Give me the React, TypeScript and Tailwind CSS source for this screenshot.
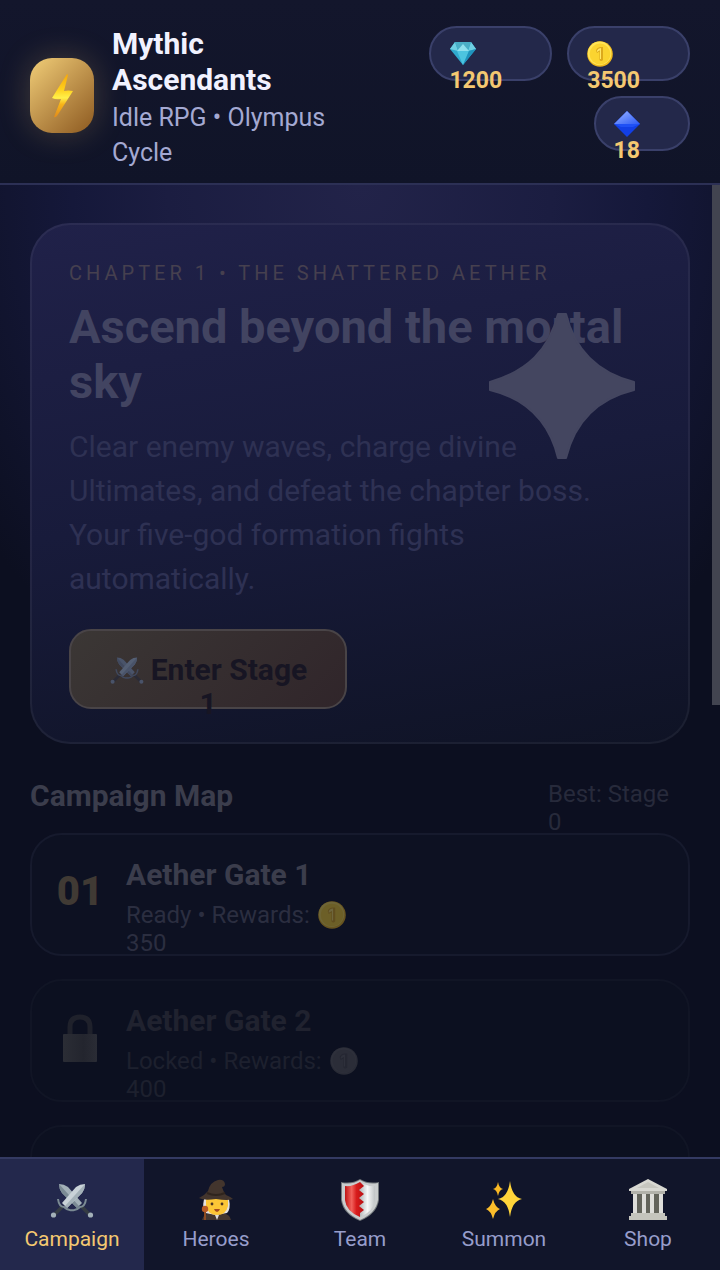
import type { ReactNode } from 'react';

function Bolt() {
  return (
    <svg viewBox="0 0 24 46" className="w-6 h-[46px]" aria-hidden="true">
      <defs>
        <linearGradient id="bolt" x1="0" y1="0" x2="0" y2="1">
          <stop offset="0" stopColor="#f5a70c" />
          <stop offset="0.35" stopColor="#ffcf1c" />
          <stop offset="0.55" stopColor="#fff04a" />
          <stop offset="0.7" stopColor="#f8b418" />
          <stop offset="1" stopColor="#e08a1c" />
        </linearGradient>
      </defs>
      <path d="M17 1 L2 25 Q6 27 11 26 L4 44 Q5 45 7 43 L23 18 Q18 17 14 18 L18 2 Z" fill="url(#bolt)" />
    </svg>
  );
}

function Gem() {
  return (
    <svg viewBox="0 0 28 26" className="w-7 h-[26px]" aria-hidden="true">
      <path d="M6 1 H22 L27 8 L14 24 L1 8 Z" fill="#2fa9cd" />
      <path d="M6 1 L9 10 L1 8 Z M22 1 L19 10 L27 8 Z" fill="#6fcfe2" />
      <path d="M6 1 H22 L19 9 L14 4 L9 9 Z" fill="#4aaec6" />
      <path d="M14 3 L20 10 H8 Z" fill="#8fe0ee" />
      <path d="M8 10 H20 L14 24 Z" fill="#4cc4e0" />
      <path d="M20 10 L27 8 L14 24 Z" fill="#1f93bd" />
    </svg>
  );
}

function Coin({ className = 'size-[26px]', muted = false }: { className?: string; muted?: boolean }) {
  return (
    <svg viewBox="0 0 26 26" className={className} aria-hidden="true">
      <circle cx="13" cy="13" r="12.8" fill={muted ? '#292b36' : '#efb81c'} />
      <circle cx="12.6" cy="12.4" r="11.8" fill={muted ? '#2e303b' : '#ffe455'} />
      <circle cx="13" cy="13" r="10.4" fill={muted ? '#2b2d38' : '#fbd430'} />
      <path d="M9 9.5 Q10 6 14 6 H16 V19 Q14 21 12.5 19 V10.5 L10 12 Z" fill={muted ? '#252732' : '#dca91c'} />
      <path d="M10 9.5 Q11 7 14 7 V18 H13 V9.3 L10 11 Z" fill={muted ? '#2e303b' : '#ffe667'} />
    </svg>
  );
}

function Diamond() {
  return (
    <svg viewBox="0 0 26 26" className="size-[26px]" aria-hidden="true">
      <defs>
        <linearGradient id="diamondTop" x1="0" y1="0" x2="1" y2="1">
          <stop offset="0.2" stopColor="#86a4ff" />
          <stop offset="1" stopColor="#2c5af5" />
        </linearGradient>
      </defs>
      <path d="M13 0 L26 13 L13 26 L0 13 Z" fill="#123fe6" />
      <path d="M13 0 L26 13 H0 Z" fill="url(#diamondTop)" />
      <path d="M0 13 H26 L19 16 H7 Z" fill="#1f50f5" />
    </svg>
  );
}

function Swords({ className = 'w-11 h-9', tint = false }: { className?: string; tint?: boolean }) {
  const light = tint ? '#7fa3d8' : '#c9d3d8';
  const mid = tint ? '#6486bd' : '#a3b1b8';
  const dark = tint ? '#4c6a9e' : '#7b8b94';
  const grip = tint ? '#18233f' : '#353c44';
  return (
    <svg viewBox="0 0 44 36" className={className} aria-hidden="true">
      <path d="M13 24 L4 33 M31 24 L40 33" stroke={grip} strokeWidth="3.5" />
      <path d="M9 2 Q14 2 18 5 L32 21 L27 26 L12 11 Q9 7 9 2 Z" fill={mid} />
      <path d="M9 2 L29 24 L27 26 L12 11 Q9 7 9 2 Z" fill={dark} />
      <path d="M35 2 Q30 2 26 5 L12 21 L17 26 L32 11 Q35 7 35 2 Z" fill={light} />
      <path d="M35 2 L15 24 L17 26 L32 11 Q35 7 35 2 Z" fill={mid} />
      <path d="M8 17 Q9 25 14 25 Q18 29 22 28 M36 17 Q35 25 30 25 Q26 29 22 28" stroke={dark} strokeWidth="2" fill="none" />
      <circle cx="3.5" cy="33" r="2.6" fill={mid} />
      <circle cx="40.5" cy="33" r="2.6" fill={mid} />
    </svg>
  );
}

function Mage() {
  return (
    <svg viewBox="0 0 40 42" className="w-10 h-[42px]" aria-hidden="true">
      <path d="M6 41 Q7 35 15 34 H26 Q34 35 35 41 Z" fill="#453830" />
      <path d="M8 20 Q6 30 9 34 L20 36 L31 34 Q35 30 33 20 Z" fill="#e5e1df" />
      <path d="M10 19 H32 V27 Q30 36 21 36 Q12 36 10 27 Z" fill="#fcc636" />
      <path d="M3 19 Q8 17 12 12 Q14 3 22 1 Q28 0 29 5 Q29 8 26 8 Q28 14 30 16 Q35 18 37 20 Q32 22 20 20 Q8 22 3 19 Z" fill="#43352d" />
      <path d="M11 14 Q20 18 29 14" stroke="#2f241d" strokeWidth="2" fill="none" />
      <circle cx="16" cy="25" r="1.4" fill="#4d3421" />
      <circle cx="26" cy="25" r="1.4" fill="#4d3421" />
      <path d="M18 30 H24 Q23 33 21 33 Q19 33 18 30 Z" fill="#a54b20" />
      <path d="M19 36 L21 41 L23 36 Z" fill="#ddd" />
      <path d="M9 32 V41" stroke="#8b4a22" strokeWidth="2" />
      <circle cx="9" cy="30" r="3.2" fill="#b85a24" />
    </svg>
  );
}

function Shield() {
  return (
    <svg viewBox="0 0 40 44" className="w-10 h-11" aria-hidden="true">
      <defs>
        <linearGradient id="shieldRed">
          <stop offset="0" stopColor="#c01414" />
          <stop offset="0.35" stopColor="#f2625c" />
          <stop offset="0.6" stopColor="#d81c1c" />
          <stop offset="1" stopColor="#b80f12" />
        </linearGradient>
        <linearGradient id="shieldSteel">
          <stop offset="0.5" stopColor="#b4b8ba" />
          <stop offset="0.75" stopColor="#f7f8f8" />
          <stop offset="1" stopColor="#bfc3c5" />
        </linearGradient>
      </defs>
      <path d="M20 1 Q28 6 39 4 V22 Q37 36 20 43 Q3 36 1 22 V4 Q12 6 20 1 Z" fill="#71777b" />
      <path d="M20 2 Q28 7 38 5 V22 Q36 35 20 42 Q4 35 2 22 V5 Q12 7 20 2 Z" fill="#c9cccd" />
      <path d="M20 4 Q28 9 35 8 V22 Q34 33 20 39 Q6 33 5 22 V8 Q12 9 20 4 Z" fill="url(#shieldSteel)" />
      <path
        d="M20 4 L24 8 L19 12 L24 16 L19 20 L24 24 L19 28 L24 32 L20 35 V39 Q6 33 5 22 V8 Q12 9 20 4 Z"
        fill="url(#shieldRed)"
      />
    </svg>
  );
}

function Sparkles() {
  return (
    <svg viewBox="0 0 36 38" className="w-9 h-[38px]" aria-hidden="true">
      <path d="M24 0 Q26 16 36 18 Q26 20 24 36 Q22 20 12 18 Q22 16 24 0 Z" fill="#ffd43a" />
      <path d="M12 1 Q13 7 17 8 Q13 9 12 15 Q11 9 7 8 Q11 7 12 1 Z" fill="#fbb924" />
      <path d="M7 18 Q9 26 14 28 Q9 30 7 38 Q5 30 0 28 Q5 26 7 18 Z" fill="#fbbd2b" />
    </svg>
  );
}

function Temple() {
  return (
    <svg viewBox="0 0 40 42" className="w-10 h-[42px]" aria-hidden="true">
      <rect x="5" y="13" width="30" height="23" fill="#63645b" />
      <path d="M20 0 L39 10 V12 H1 V10 Z" fill="#d8d8d2" />
      <path d="M20 3 L31 9 H9 Z" fill="#c6c6bf" />
      <path d="M3 12 H37 V15 H3 Z" fill="#b2b2aa" />
      <path d="M5 15 H9 V35 H5 Z M14 15 H18 V35 H14 Z M22 15 H26 V35 H22 Z M31 15 H35 V35 H31 Z" fill="#dededa" />
      <path d="M3 34 H37 V37 H39 V41 H1 V37 H3 Z" fill="#c5c5bd" />
    </svg>
  );
}

function Lock() {
  return (
    <svg viewBox="0 0 34 48" className="w-[34px] h-12" aria-hidden="true">
      <defs>
        <linearGradient id="lock">
          <stop offset="0" stopColor="#2b2d35" />
          <stop offset="0.6" stopColor="#23252e" />
          <stop offset="1" stopColor="#2a2c35" />
        </linearGradient>
      </defs>
      <path d="M7 21 V13 Q7 3 17 3 Q27 3 27 13 V21" stroke="#1f212b" strokeWidth="5" fill="none" />
      <rect x="0" y="20" width="34" height="28" rx="1" fill="url(#lock)" />
    </svg>
  );
}

function Pill({ icon, value }: { icon: ReactNode; value: string }) {
  return (
    <div className="h-[55px] rounded-full border-2 border-[#3a406a] bg-[#23284a] pt-3 pr-12 pl-[18px]">
      <div className="flex h-7 items-center">{icon}</div>
      <div className="text-[23px] leading-[26px] font-bold text-[#f4c871]">{value}</div>
    </div>
  );
}

const stages = [
  { name: 'Aether Gate 1', status: 'Ready', reward: 350, locked: false },
  { name: 'Aether Gate 2', status: 'Locked', reward: 400, locked: true },
];

const tabs = [
  { label: 'Campaign', icon: <Swords /> },
  { label: 'Heroes', icon: <Mage /> },
  { label: 'Team', icon: <Shield /> },
  { label: 'Summon', icon: <Sparkles /> },
  { label: 'Shop', icon: <Temple /> },
];

export default function App() {
  return (
    <div className="flex h-screen flex-col overflow-hidden bg-[#0b0f1e] font-['Roboto',sans-serif] text-[#f1f2ff]">
      <header className="flex shrink-0 items-start justify-between border-b-2 border-[#2c3055] bg-linear-to-b from-[#13162c] to-[#101428] px-[30px] pt-[26px] pb-[13px]">
        <div className="flex items-start gap-[18px]">
          <div className="mt-8 flex h-[75px] w-16 shrink-0 items-center justify-center rounded-[22px] bg-linear-135 from-[#f1ce78] to-[#8d5a20] shadow-[0_0_32px_rgba(244,200,113,0.22)]">
            <Bolt />
          </div>
          <div className="w-56">
            <h1 className="text-[30px] leading-9 font-bold">Mythic Ascendants</h1>
            <p className="mt-0.5 text-[25px] leading-[35px] text-[#a4a9d2]">Idle RPG • Olympus Cycle</p>
          </div>
        </div>
        <div className="flex w-[280px] flex-wrap justify-end gap-[15px]">
          <Pill icon={<Gem />} value="1200" />
          <Pill icon={<Coin />} value="3500" />
          <Pill icon={<Diamond />} value="18" />
        </div>
      </header>

      <div className="flex min-h-0 flex-1 bg-[radial-gradient(ellipse_480px_560px_at_50%_0%,#222349_0%,#1b1d41_40%,#15183a_60%,#0c0f20_100%)]">
        <main className="min-w-0 flex-1 overflow-hidden pt-[38px] pr-[22px] pl-[30px]">
          <section className="relative rounded-[40px] border-2 border-white/5 bg-linear-170 from-[#202149] via-[#181b3b] to-[#0f1325] bg-origin-border px-[37px] pt-[34px] pb-[33px]">
            <p className="text-[20px] leading-7 tracking-[4px] text-[#46404f]">CHAPTER 1 • THE SHATTERED AETHER</p>
            <h2 className="mt-3 text-[47px] leading-[55px] font-bold text-[#424461]">Ascend beyond the mortal sky</h2>
            <p className="mt-4 w-[540px] max-w-full text-[30px] leading-[44px] text-[#2e3153]">
              Clear enemy waves, charge divine Ultimates, and defeat the chapter boss. Your five-god formation fights
              automatically.
            </p>
            <button className="mt-7 flex h-20 w-[278px] flex-col items-center rounded-[22px] border-2 border-[#494447] bg-linear-135 from-[#3b3735] to-[#30252a] bg-origin-border pt-[22px] text-[30px] leading-[34px] font-bold text-[#171523]">
              <span className="flex items-center gap-1.5">
                <Swords className="h-7 w-9 opacity-40" tint />
                Enter Stage
              </span>
              <span>1</span>
            </button>
            <svg viewBox="0 0 146 146" className="absolute top-[88px] right-[53px] size-[146px]" aria-hidden="true">
              <path
                d="M69 1 H77 C86 38 110 60 145 69 V77 C108 86 86 108 77 145 H69 C60 108 38 86 1 77 V69 C38 58 60 37 69 1 Z"
                fill="#444660"
                stroke="#444660"
                strokeWidth="2"
                strokeLinejoin="round"
              />
            </svg>
          </section>

          <div className="flex h-[89px] items-start justify-between pt-8 pr-[18px]">
            <h2 className="text-[30px] leading-10 font-bold text-[#3b3d4c]">Campaign Map</h2>
            <p className="w-[124px] pt-1 text-[24px] leading-7 text-[#272a3b]">Best: Stage 0</p>
          </div>

          <div className="flex flex-col gap-[23px]">
            {stages.map((stage, i) => (
              <button
                key={stage.name}
                className={`flex h-[123px] shrink-0 rounded-[32px] border-2 pl-[23px] text-left ${
                  stage.locked ? 'border-[#111525] bg-[#0c1020] text-[#20222f]' : 'border-[#161a2d] bg-[#0d1122] text-[#3b3d4c]'
                }`}
              >
                <span className="flex w-[50px] justify-center self-center pb-1.5 text-[40px] font-black text-[#403a34]">
                  {stage.locked ? <Lock /> : `0${i + 1}`}
                </span>
                <span className="ml-[21px] flex flex-col pt-5">
                  <span className="text-[30px] leading-10 font-bold">{stage.name}</span>
                  <span className={`pt-1.5 text-[24px] leading-7 ${stage.locked ? 'text-[#1d202e]' : 'text-[#2b2e40]'}`}>
                    <span className="flex h-7 items-center gap-2">
                      {stage.status} • Rewards:
                      <Coin className={stage.locked ? 'size-7' : 'size-7 opacity-40'} muted={stage.locked} />
                    </span>
                    {stage.reward}
                  </span>
                </span>
              </button>
            ))}
            <div className="h-[123px] shrink-0 rounded-[32px] border-2 border-[#111525] bg-[#0c1020]" />
          </div>
        </main>
        <div className="h-[520px] w-2 shrink-0 bg-[#424450]" />
      </div>

      <nav className="grid shrink-0 grid-cols-5 border-t-2 border-[#343a62] bg-[#11152a]">
        {tabs.map((tab, i) => (
          <button
            key={tab.label}
            className={`flex h-[111px] flex-col items-center pt-[18px] text-[21px] leading-8 ${
              i === 0 ? 'bg-[#23284c] text-[#f4c871]' : 'text-[#979dcb]'
            }`}
          >
            <span className="flex h-[46px] items-center">{tab.icon}</span>
            {tab.label}
          </button>
        ))}
      </nav>
    </div>
  );
}
